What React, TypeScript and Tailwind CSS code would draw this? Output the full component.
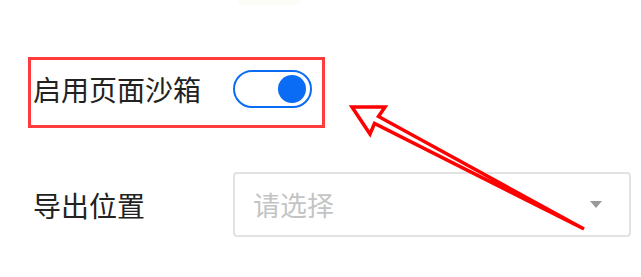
export default function App() {
  const font = { fontFamily: '"Noto Sans CJK SC", "Noto Sans", sans-serif' };
  return (
    <div
      className="relative w-[641px] h-[277px] overflow-hidden bg-white flex flex-col"
      style={font}
    >
      {/* faint remnant of the row above */}
      <div className="h-[6px] flex">
        <div className="ml-[238px] w-[62px] h-[5px] bg-[#fbfdf6] rounded-b-sm" />
      </div>

      {/* highlighted row: sandbox toggle */}
      <div className="mt-[51px] ml-[28px] w-[297px] h-[71px] border-[3px] border-[#ff3b3b] flex items-center pb-[8px]">
        <div className="pl-[2px] w-[202px] text-[28px] leading-none text-[#222]">
          启用页面沙箱
        </div>
        <div className="w-[79px] h-[38px] rounded-full border-2 border-[#0a6cf5] bg-white flex items-center justify-end pr-[4px]">
          <div className="w-[28px] h-[28px] rounded-full bg-[#0a6cf5]" />
        </div>
      </div>

      {/* export location select */}
      <div className="mt-[44px] flex items-center">
        <div className="ml-[33px] w-[200px] text-[28px] leading-none text-[#222]">
          导出位置
        </div>
        <div className="w-[398px] h-[65px] rounded-[4px] border-2 border-[#e2e2e2] flex items-center pl-[18px] pr-[27px]">
          <span className="flex-1 text-[27px] leading-none text-[#c4c4c4]">请选择</span>
          <svg width="12" height="7" viewBox="0 0 12 7">
            <path d="M0 0 L12 0 L6 7 Z" fill="#999" />
          </svg>
        </div>
      </div>

      {/* red annotation arrow */}
      <svg
        className="absolute left-0 top-0 pointer-events-none"
        width="641"
        height="277"
        viewBox="0 0 641 277"
      >
        <polygon
          points="352,107 385,107 378.5,116.5 584,229 374.5,123.5 370,134"
          fill="white"
          stroke="#ff0000"
          strokeWidth="3.5"
          strokeLinejoin="miter"
        />
      </svg>
    </div>
  );
}
